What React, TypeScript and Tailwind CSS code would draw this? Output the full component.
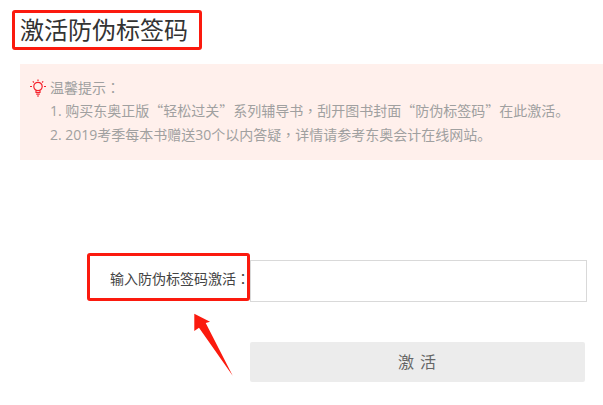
const font = "font-['Open_Sans','Noto_Sans_CJK_SC',sans-serif]"
const cjk = "font-['Noto_Sans_CJK_SC',sans-serif] leading-[0]"
const centered = "font-['Noto_Sans_CJK_TC',sans-serif] leading-[0]"

function Bulb() {
  return (
    <svg width="16" height="18" viewBox="0 0 16 18" fill="none" stroke="#f5222d" strokeWidth="1.2" className="shrink-0">
      <circle cx="8" cy="7.5" r="4.2" />
      <path d="M6 11.5v2h4v-2" />
      <path d="M6.2 15.2h3.6M7 17h2" />
      <path d="M8 0.5v1.5M2.8 2.4l1.1 1.1M13.2 2.4l-1.1 1.1M0 7.5h2M14 7.5h2" />
    </svg>
  )
}

function Quote({ children }: { children: string }) {
  return <span className={cjk}>{children}</span>
}

function Mark({ children }: { children: string }) {
  return <span lang="zh-TW" className={centered}>{children}</span>
}

export default function App() {
  return (
    <div lang="zh-CN" className={`relative w-[603px] h-[405px] overflow-hidden bg-white text-[#333] ${font}`}>
      <div className="pt-[10px] pl-[12px]">
        <h1 className="w-[190px] h-[40px] border-[3px] border-[#fb1a0e] rounded-[3px] pl-[5px] text-[24px] leading-[34px] font-normal text-[#333]">
          激活防伪标签码
        </h1>
      </div>

      <div className="ml-[20px] mt-[14px] h-[96px] bg-[#fff0ec] pt-[12px] pl-[10px] text-[14px] leading-[24px] text-[#a0a0a0]">
        <div className="flex items-center gap-[4px] h-[23px]">
          <Bulb />
          <span>温馨提示<Mark>：</Mark></span>
        </div>
        <p className="pl-[20px]">
          1. 购买东奥正版<Quote>“</Quote>轻松过关<Quote>”</Quote>系列辅导书<Mark>，</Mark>刮开图书封面<Quote>“</Quote>防伪标签码<Quote>”</Quote>在此激活。
        </p>
        <p className="pl-[20px]">2. 2019考季每本书赠送30个以内答疑<Mark>，</Mark>详情请参考东奥会计在线网站。</p>
      </div>

      <div className="flex items-start ml-[87px] mt-[93px]">
        <div className="w-[163px] h-[48px] border-[3px] border-[#fb1a0e] rounded-[3px] pt-[13px] pl-[20px] text-[14px] leading-[20px] text-[#444] whitespace-nowrap">
          输入防伪标签码激活<Mark>：</Mark>
        </div>
        <input className="w-[337px] h-[42px] mt-[7px] border border-[#d9d9d9] outline-none bg-white" />
      </div>

      <div className="ml-[250px] mt-[40px]">
        <button className="w-[335px] h-[40px] bg-[#ececec] rounded-[2px] text-[16px] text-[#666] tracking-[1px]">
          激 活
        </button>
      </div>

      <svg width="44" height="68" viewBox="0 0 44 68" className="absolute left-[192px] top-[313px]">
        <path d="M2.3 0.7L18 8.7L13.7 10L40.7 62.7L7 14.7L2.3 18Z" fill="#fb1a0e" />
      </svg>
    </div>
  )
}
